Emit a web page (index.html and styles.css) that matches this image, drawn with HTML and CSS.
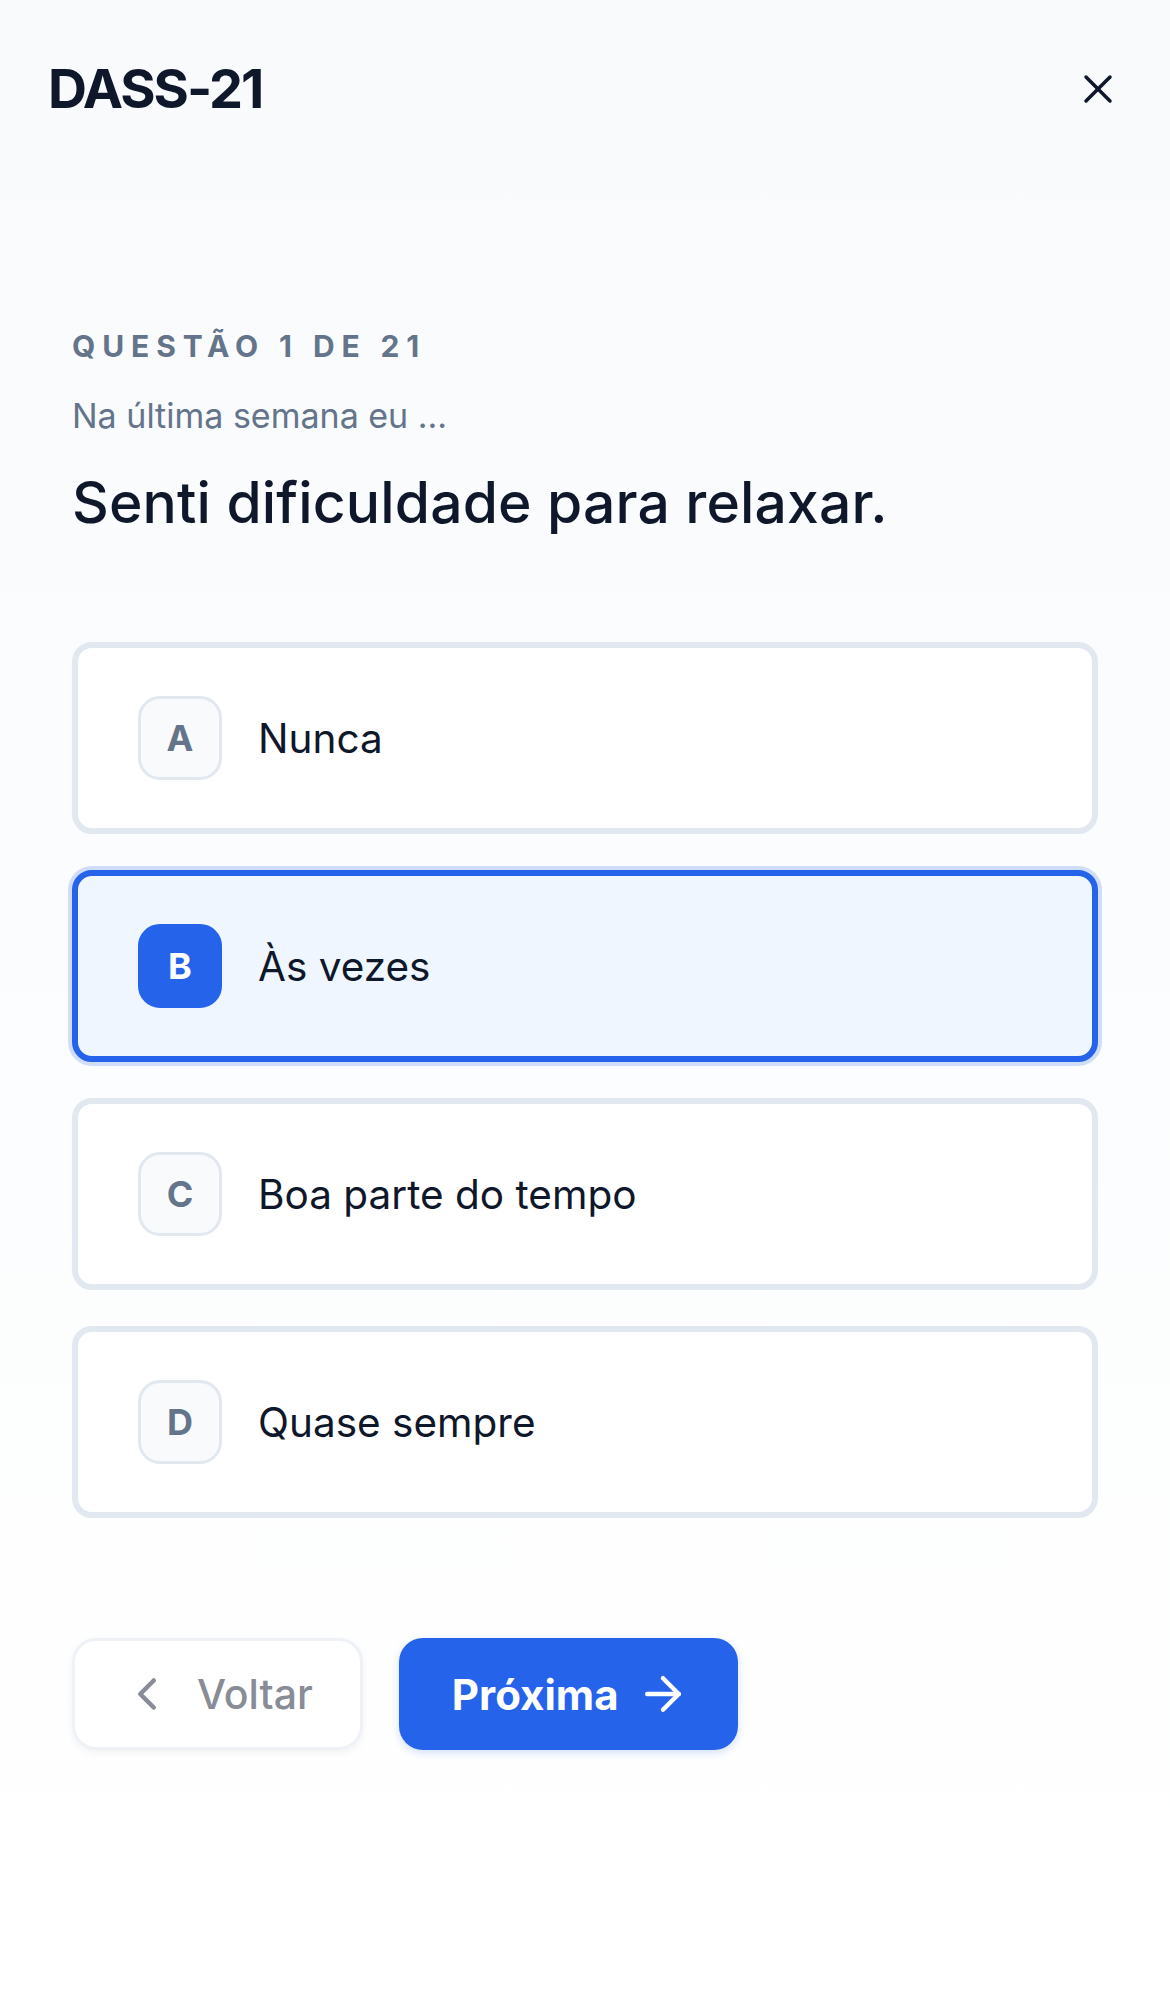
FILE: index.html
```html
<!DOCTYPE html>
<html lang="pt-BR">

<head>
    <meta charset="UTF-8">
    <meta name="viewport" content="width=device-width, initial-scale=1.0">
    <title>DASS-21</title>
    <link rel="stylesheet" href="styles.css">
</head>

<body>
    <div class="page">
        <header class="header">
            <h1 class="title">DASS-21</h1>
            <button class="close" aria-label="Fechar">
                <svg viewBox="0 0 24 24" width="48" height="48" fill="none" stroke="currentColor" stroke-width="1.75" stroke-linecap="round" stroke-linejoin="round">
                    <path d="M18 6 6 18"></path>
                    <path d="m6 6 12 12"></path>
                </svg>
            </button>
        </header>

        <main class="quiz">
            <p class="counter">Questão 1 de 21</p>
            <p class="prompt">Na última semana eu ...</p>
            <h2 class="question">Senti dificuldade para relaxar.</h2>

            <div class="options">
                <button class="option">
                    <span class="letter">A</span>
                    <span class="label">Nunca</span>
                </button>
                <button class="option selected">
                    <span class="letter">B</span>
                    <span class="label">Às vezes</span>
                </button>
                <button class="option">
                    <span class="letter">C</span>
                    <span class="label">Boa parte do tempo</span>
                </button>
                <button class="option">
                    <span class="letter">D</span>
                    <span class="label">Quase sempre</span>
                </button>
            </div>

            <div class="nav">
                <button class="btn btn-back" disabled>
                    <svg viewBox="0 0 24 24" width="54" height="54" fill="none" stroke="currentColor" stroke-width="2" stroke-linecap="round" stroke-linejoin="round">
                        <path d="m15 18-6-6 6-6"></path>
                    </svg>
                    Voltar
                </button>
                <button class="btn btn-next">
                    Próxima
                    <svg viewBox="0 0 24 24" width="54" height="54" fill="none" stroke="currentColor" stroke-width="2" stroke-linecap="round" stroke-linejoin="round">
                        <path d="M5 12h14"></path>
                        <path d="m12 5 7 7-7 7"></path>
                    </svg>
                </button>
            </div>
        </main>
    </div>
</body>

</html>
```

FILE: styles.css
```css
* {
  box-sizing: border-box;
}
body {
  margin: 0;
  font-family: 'Inter', 'Liberation Sans', Arial, sans-serif;
  color: #0f172a;
  background: #fff;
}
.page {
  min-height: 100vh;
  background: linear-gradient(180deg, #f8fafc 0%, #ffffff 100%);
}
.header {
  display: flex;
  justify-content: space-between;
  align-items: center;
  padding: 56px 48px 0;
}
.title {
  margin: 0;
  font-size: 54px;
  line-height: 65px;
  font-weight: 700;
  letter-spacing: -2px;
  color: #0f172a;
}
.close {
  display: flex;
  padding: 0;
  border: none;
  background: none;
  color: #0f172a;
  cursor: pointer;
}
.quiz {
  padding: 207px 72px 0;
}
.counter {
  margin: 0;
  font-size: 30px;
  line-height: 36px;
  font-weight: 700;
  letter-spacing: 6.9px;
  text-transform: uppercase;
  color: #64748b;
}
.prompt {
  margin: 28px 0 0;
  font-size: 34px;
  line-height: 48px;
  color: #64748b;
}
.question {
  margin: 29px 0 0;
  font-size: 57px;
  line-height: 67px;
  font-weight: 500;
  letter-spacing: 0.15px;
  color: #0f172a;
}
.options {
  display: flex;
  flex-direction: column;
  gap: 36px;
  margin-top: 106px;
}
.option {
  display: flex;
  align-items: center;
  gap: 36px;
  width: 100%;
  padding: 48px 60px;
  background: #fff;
  border: 6px solid #e2e8f0;
  border-radius: 20px;
  font-family: inherit;
  text-align: left;
  cursor: pointer;
}
.option.selected {
  background: #eff6ff;
  border-color: #2563eb;
  box-shadow: 0 0 0 4px rgba(37, 99, 235, 0.2);
}
.letter {
  display: flex;
  align-items: center;
  justify-content: center;
  width: 84px;
  height: 84px;
  flex-shrink: 0;
  border: 3px solid #e2e8f0;
  border-radius: 22px;
  background: #f8fafc;
  font-size: 36px;
  font-weight: 700;
  color: #64748b;
}
.option.selected .letter {
  background: #2563eb;
  border-color: #2563eb;
  color: #fff;
}
.label {
  font-size: 40.5px;
  color: #0f172a;
}
.nav {
  display: flex;
  gap: 36px;
  margin-top: 120px;
}
.btn {
  display: flex;
  align-items: center;
  height: 112px;
  border-radius: 24px;
  font-family: inherit;
  font-size: 42px;
  cursor: pointer;
}
.btn-back {
  gap: 23px;
  padding: 0 47px 0 45px;
  background: #fff;
  border: 3px solid #eef2f7;
  box-shadow: 0 3px 8px rgba(15, 23, 42, 0.05);
  color: #878c96;
  font-size: 41px;
  font-weight: 500;
}
.btn-next {
  gap: 17px;
  padding: 0 48px 0 53px;
  background: #2563eb;
  border: none;
  box-shadow: 0 3px 8px rgba(37, 99, 235, 0.2);
  color: #fff;
  font-weight: 700;
}
```
